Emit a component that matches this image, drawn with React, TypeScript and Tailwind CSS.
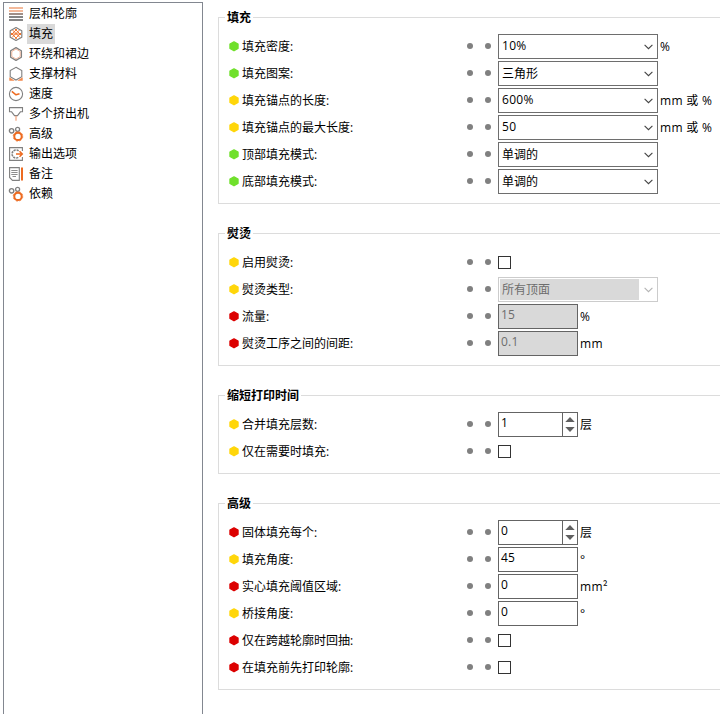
import React from "react";

const GREEN = "#70e02c";
const YELLOW = "#ffd60a";
const RED = "#dc0000";
const GREY = "#808080";
const ORANGE = "#ed6b21";

const cn = "font-['Open_Sans','Noto_Sans_CJK_SC',sans-serif]";

type Kind = "combo" | "comboOff" | "text" | "textOff" | "spin" | "check";
type Row = { color: string; label: string; kind: Kind; value?: string; unit?: string };
type Group = { title: string; rows: Row[] };

const groups: Group[] = [
  {
    title: "填充",
    rows: [
      { color: GREEN, label: "填充密度:", kind: "combo", value: "10%", unit: "%" },
      { color: GREEN, label: "填充图案:", kind: "combo", value: "三角形" },
      { color: YELLOW, label: "填充锚点的长度:", kind: "combo", value: "600%", unit: "mm 或 %" },
      { color: YELLOW, label: "填充锚点的最大长度:", kind: "combo", value: "50", unit: "mm 或 %" },
      { color: GREEN, label: "顶部填充模式:", kind: "combo", value: "单调的" },
      { color: GREEN, label: "底部填充模式:", kind: "combo", value: "单调的" },
    ],
  },
  {
    title: "熨烫",
    rows: [
      { color: YELLOW, label: "启用熨烫:", kind: "check" },
      { color: YELLOW, label: "熨烫类型:", kind: "comboOff", value: "所有顶面" },
      { color: RED, label: "流量:", kind: "textOff", value: "15", unit: "%" },
      { color: RED, label: "熨烫工序之间的间距:", kind: "textOff", value: "0.1", unit: "mm" },
    ],
  },
  {
    title: "缩短打印时间",
    rows: [
      { color: YELLOW, label: "合并填充层数:", kind: "spin", value: "1", unit: "层" },
      { color: YELLOW, label: "仅在需要时填充:", kind: "check" },
    ],
  },
  {
    title: "高级",
    rows: [
      { color: RED, label: "固体填充每个:", kind: "spin", value: "0", unit: "层" },
      { color: YELLOW, label: "填充角度:", kind: "text", value: "45", unit: "°" },
      { color: RED, label: "实心填充阈值区域:", kind: "text", value: "0", unit: "mm²" },
      { color: YELLOW, label: "桥接角度:", kind: "text", value: "0", unit: "°" },
      { color: RED, label: "仅在跨越轮廓时回抽:", kind: "check" },
      { color: RED, label: "在填充前先打印轮廓:", kind: "check" },
    ],
  },
];

function Svg({ children }: { children: React.ReactNode }) {
  return (
    <svg width="16" height="16" viewBox="0 0 16 16" fill="none" className="block shrink-0">
      {children}
    </svg>
  );
}

const LayersIcon = () => (
  <Svg>
    <path d="M1 2H15M1 5H15" stroke="#f0a27a" strokeWidth="1.6" />
    <path d="M1 8H15" stroke="#a08f88" strokeWidth="2" />
    <path d="M1 11H15M1 14H15" stroke="#858585" strokeWidth="2" />
  </Svg>
);

const InfillIcon = () => (
  <Svg>
    <path d="M8 1.5L13.8 4.7V11.3L8 14.5L2.2 11.3V4.7Z" stroke={GREY} strokeWidth="1.2" strokeLinejoin="round" />
    <path
      d="M4.5 4L12 11.5M3 7L8.8 12.8M7 3L13 9M11.5 4L4 11.5M13 7L7.2 12.8M9 3L3 9M3.2 8H12.8"
      stroke={ORANGE}
      strokeWidth="0.9"
    />
  </Svg>
);

const SkirtIcon = () => (
  <Svg>
    <path d="M8 1.6L13.4 4.8V11.2L8 14.4L2.6 11.2V4.8Z" stroke={GREY} strokeWidth="1.3" strokeLinejoin="round" />
    <path d="M8 3L12.2 5.5V10.5L8 13L3.8 10.5V5.5Z" stroke="#f0a888" strokeWidth="0.8" />
  </Svg>
);

const SupportIcon = () => (
  <Svg>
    <path d="M8 1.3L13.8 4.6V10.7L8 14L2.2 10.7V4.6Z" stroke={GREY} strokeWidth="1.1" />
    <path d="M1.3 11.3L6.8 14.8H1.3ZM14.7 11.3L9.2 14.8H14.7Z" fill={ORANGE} fillOpacity="0.8" />
  </Svg>
);

const SpeedIcon = () => (
  <Svg>
    <circle cx="8" cy="8" r="6.6" stroke={GREY} strokeWidth="1.1" />
    <path d="M3.8 5.3L8 8.8L11.5 7.8" stroke={ORANGE} strokeWidth="1.5" strokeLinejoin="round" />
  </Svg>
);

const ExtruderIcon = () => (
  <Svg>
    <path d="M1.5 1.6H14.5V5.8H12.4L9.5 9.6H6.5L3.6 5.8H1.5Z" stroke={GREY} strokeWidth="1.1" />
    <path d="M8 9.8V14.8" stroke="#f3a27a" strokeWidth="1.2" />
  </Svg>
);

const GearsIcon = () => (
  <Svg>
    <circle cx="3.6" cy="4.8" r="2.2" stroke={GREY} strokeWidth="1.4" />
    <circle cx="9.6" cy="3.3" r="2" stroke={GREY} strokeWidth="1.3" />
    <circle cx="10" cy="10.4" r="3.7" stroke={ORANGE} strokeWidth="2" />
    <circle cx="10" cy="10.4" r="4.8" stroke={ORANGE} strokeWidth="0.7" strokeDasharray="2 1.77" />
  </Svg>
);

const OutputIcon = () => (
  <Svg>
    <path d="M14.4 5V1.6H1.6V14.4H14.4V11" stroke={GREY} strokeWidth="1.1" />
    <path d="M10.6 4.9A4 4 0 1 0 10.6 11.1" stroke={GREY} strokeWidth="1.6" strokeDasharray="2.2 0.8" />
    <path d="M8 8H14M11.5 5.3L14.3 8L11.5 10.7" stroke={ORANGE} strokeWidth="1.5" />
  </Svg>
);

const NotesIcon = () => (
  <Svg>
    <path d="M1.6 1.6H11.3V14.4H4.5L1.6 11.5Z" stroke={GREY} strokeWidth="1.1" />
    <path d="M3.3 4.5H9.6M3.3 6.5H9.6M3.3 8.5H9.6M4.5 10.5H8" stroke={GREY} strokeWidth="0.9" />
    <path d="M14 1.5V14.5" stroke={ORANGE} strokeWidth="2" />
  </Svg>
);

const nav = [
  { label: "层和轮廓", Icon: LayersIcon },
  { label: "填充", Icon: InfillIcon, selected: true },
  { label: "环绕和裙边", Icon: SkirtIcon },
  { label: "支撑材料", Icon: SupportIcon },
  { label: "速度", Icon: SpeedIcon },
  { label: "多个挤出机", Icon: ExtruderIcon },
  { label: "高级", Icon: GearsIcon },
  { label: "输出选项", Icon: OutputIcon },
  { label: "备注", Icon: NotesIcon },
  { label: "依赖", Icon: GearsIcon },
];

function Chevron({ color }: { color: string }) {
  return (
    <svg width="9" height="6" viewBox="0 0 9 6" fill="none" className="block">
      <path d="M0.6 0.8L4.5 4.7L8.4 0.8" stroke={color} strokeWidth="1.1" />
    </svg>
  );
}

function Control({ row }: { row: Row }) {
  const latin = /^[\d.%]+$/.test(row.value ?? "");
  switch (row.kind) {
    case "combo":
      return (
        <div className="flex h-[25px] w-40 items-center justify-between border border-[#6e6e6e] bg-white pr-1 pl-[3px]">
          <span className={latin ? "pb-px tracking-[0.3px]" : "pt-px"}>{row.value}</span>
          <Chevron color="#444" />
        </div>
      );
    case "comboOff":
      return (
        <div className="flex h-[25px] w-40 items-center justify-between border border-[#ccc] bg-white pr-1 pl-px">
          <span className="h-[21px] w-[139px] bg-[#d9d9d9] pl-0.5 leading-[21px] text-[#6d6d6d]">{row.value}</span>
          <Chevron color="#b4b4b4" />
        </div>
      );
    case "text":
      return <div className="h-[25px] w-20 border border-[#646464] bg-white pl-0.5 leading-5 tracking-[0.2px]">{row.value}</div>;
    case "textOff":
      return (
        <div className="h-[25px] w-20 border border-[#646464] bg-[#d9d9d9] pl-0.5 leading-5 tracking-[0.2px] text-[#6d6d6d]">
          {row.value}
        </div>
      );
    case "spin":
      return (
        <div className="flex h-[25px] w-20 border border-[#646464] bg-white">
          <span className="flex-1 pl-0.5 leading-5">{row.value}</span>
          <span className="flex w-[15px] items-center justify-center border-l border-[#646464]">
            <svg width="10" height="15" viewBox="0 0 10 15" className="block" fill="#606060">
              <path d="M0.3 5L5 0L9.7 5Z" />
              <path d="M0.3 10L5 15L9.7 10Z" />
            </svg>
          </span>
        </div>
      );
    case "check":
      return <div className="size-[13px] border border-[#333] bg-white" />;
  }
}

function SettingRow({ row }: { row: Row }) {
  return (
    <div className="flex h-[27px] items-center pl-[10px]">
      <svg width="10" height="11" viewBox="0 0 10 11" className="mr-[3px] block shrink-0" fill={row.color}>
        <path
          d="M5 0.9L9 3.1V7.5L5 9.7L1 7.5V3.1Z"
          stroke={row.color}
          strokeWidth="1.4"
          strokeLinejoin="round"
        />
      </svg>
      <span className="w-[225px] shrink-0">{row.label}</span>
      <span className="flex w-[31px] shrink-0 gap-3 pb-px">
        <i className="size-1.5 rounded-full bg-[#808080]" />
        <i className="size-1.5 rounded-full bg-[#808080]" />
      </span>
      <Control row={row} />
      {row.unit && <span className="pl-0.5 tracking-[0.3px]">
        {row.unit === "mm²" ? <>mm<span className="font-['Noto_Sans_CJK_SC',sans-serif]">²</span></> : row.unit}
      </span>}
    </div>
  );
}

export default function App() {
  return (
    <div className={`flex h-[714px] w-[720px] overflow-hidden bg-white text-[12px] leading-4 whitespace-nowrap text-black ${cn}`}>
      <nav className="mt-0.5 ml-[3px] w-[200px] shrink-0 border-x border-t border-[#828790] pt-px pl-1">
        {nav.map(({ label, Icon, selected }) => (
          <div key={label} className="flex h-5 items-center gap-[3px]">
            <Icon />
            <span className={`h-5 px-0.5 leading-5 ${selected ? "bg-[#d9d9d9]" : ""}`}>{label}</span>
          </div>
        ))}
      </nav>
      <main className="ml-[15px] flex flex-1 flex-col gap-[29px] pt-[17px]">
        {groups.map((g) => (
          <section key={g.title} className="w-[510px] border border-[#dcdcdc] pb-2">
            <h2 className="-mt-2 mb-[7px] ml-1.5 w-fit bg-white px-0.5 leading-4 font-bold">{g.title}</h2>
            {g.rows.map((r) => (
              <SettingRow key={r.label} row={r} />
            ))}
          </section>
        ))}
      </main>
    </div>
  );
}
